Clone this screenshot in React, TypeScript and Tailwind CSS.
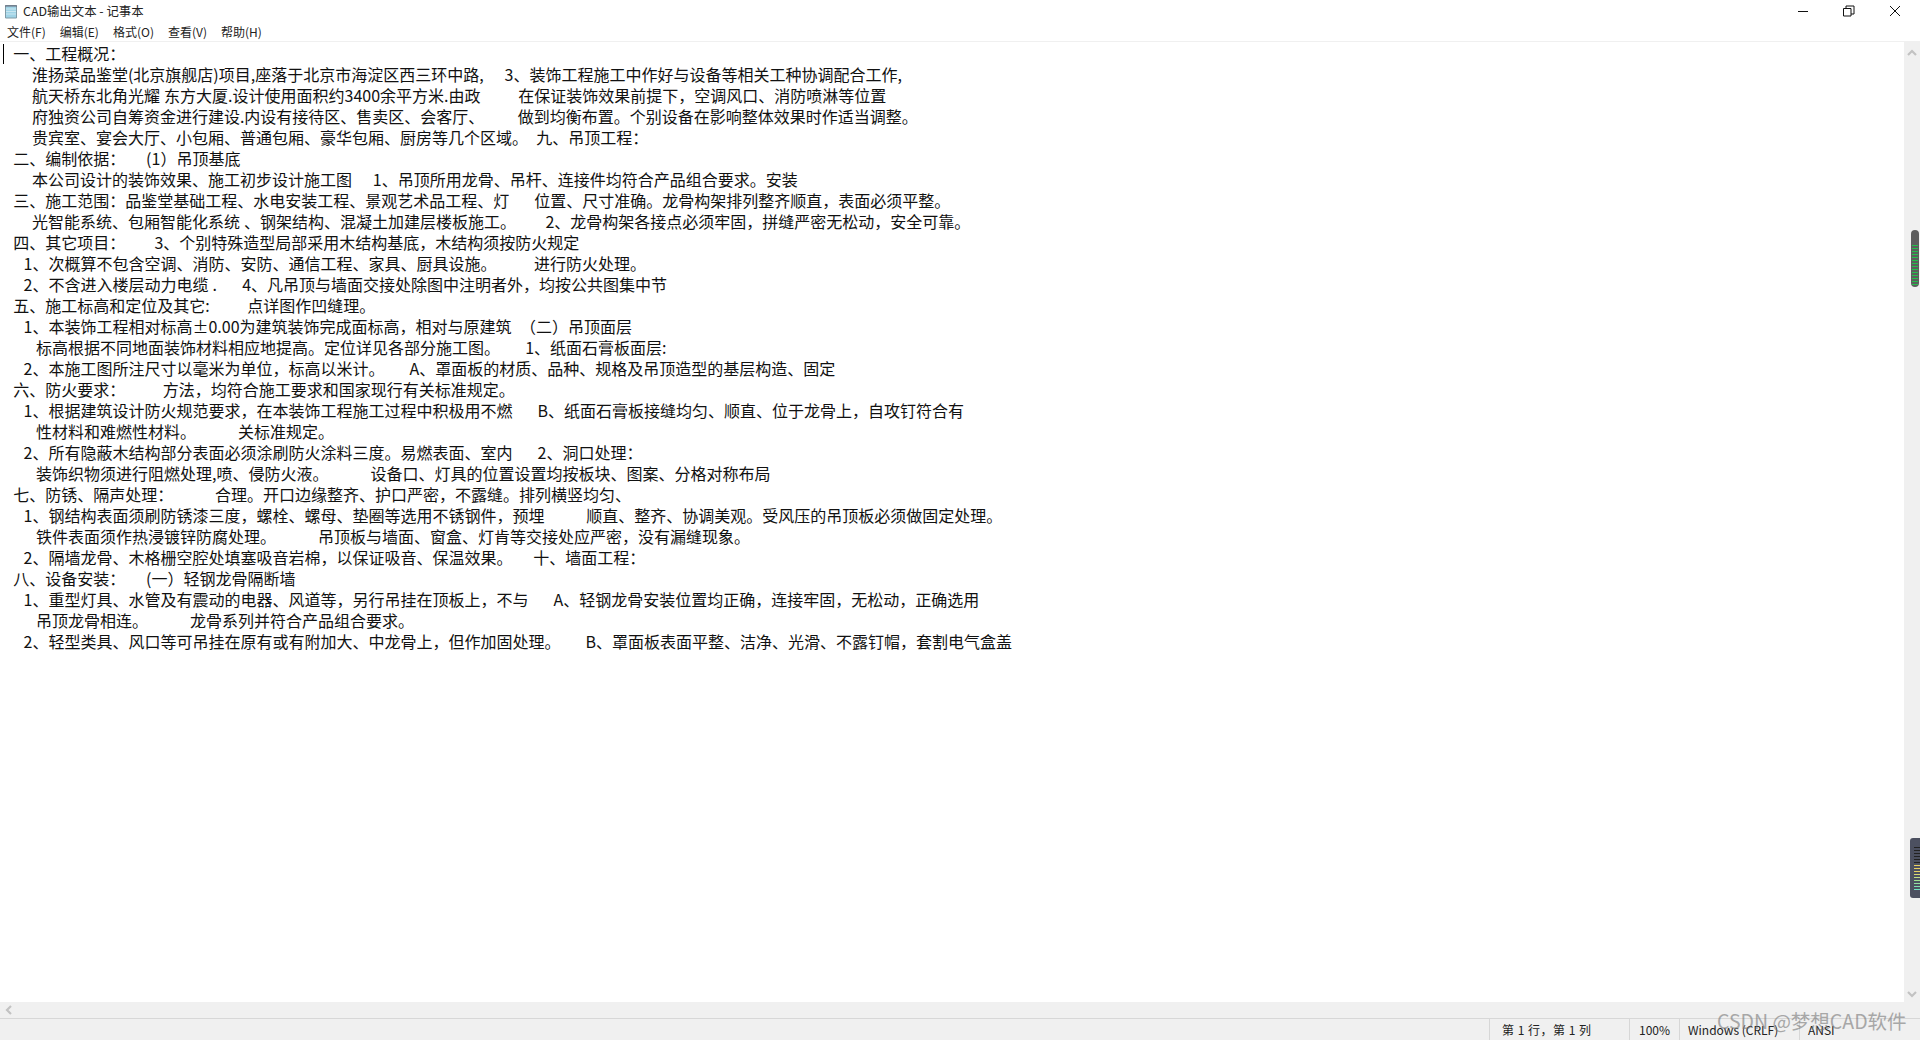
const lines = [
  " 一、工程概况：",
  "     淮扬菜品鉴堂(北京旗舰店)项目,座落于北京市海淀区西三环中路,     3、装饰工程施工中作好与设备等相关工种协调配合工作,",
  "     航天桥东北角光耀 东方大厦.设计使用面积约3400余平方米.由政         在保证装饰效果前提下，空调风口、消防喷淋等位置",
  "     府独资公司自筹资金进行建设.内设有接待区、售卖区、会客厅、        做到均衡布置。个别设备在影响整体效果时作适当调整。",
  "     贵宾室、宴会大厅、小包厢、普通包厢、豪华包厢、厨房等几个区域。  九、吊顶工程：",
  " 二、编制依据：     (1）吊顶基底",
  "     本公司设计的装饰效果、施工初步设计施工图     1、吊顶所用龙骨、吊杆、连接件均符合产品组合要求。安装",
  " 三、施工范围：品鉴堂基础工程、水电安装工程、景观艺术品工程、灯      位置、尺寸准确。龙骨构架排列整齐顺直，表面必须平整。",
  "     光智能系统、包厢智能化系统 、钢架结构、混凝土加建层楼板施工。       2、龙骨构架各接点必须牢固，拼缝严密无松动，安全可靠。",
  " 四、其它项目：       3、个别特殊造型局部采用木结构基底，木结构须按防火规定",
  "   1、次概算不包含空调、消防、安防、通信工程、家具、厨具设施。         进行防火处理。",
  "   2、不含进入楼层动力电缆 .      4、凡吊顶与墙面交接处除图中注明者外，均按公共图集中节",
  " 五、施工标高和定位及其它:         点详图作凹缝理。",
  "   1、本装饰工程相对标高±0.00为建筑装饰完成面标高，相对与原建筑  （二）吊顶面层",
  "      标高根据不同地面装饰材料相应地提高。定位详见各部分施工图。      1、纸面石膏板面层:",
  "   2、本施工图所注尺寸以毫米为单位，标高以米计。      A、罩面板的材质、品种、规格及吊顶造型的基层构造、固定",
  " 六、防火要求：         方法，均符合施工要求和国家现行有关标准规定。",
  "   1、根据建筑设计防火规范要求，在本装饰工程施工过程中积极用不燃      B、纸面石膏板接缝均匀、顺直、位于龙骨上，自攻钉符合有",
  "      性材料和难燃性材料。          关标准规定。",
  "   2、所有隐蔽木结构部分表面必须涂刷防火涂料三度。易燃表面、室内      2、洞口处理：",
  "      装饰织物须进行阻燃处理,喷、侵防火液。          设备口、灯具的位置设置均按板块、图案、分格对称布局",
  " 七、防锈、隔声处理：          合理。开口边缘整齐、护口严密，不露缝。排列横竖均匀、",
  "   1、钢结构表面须刷防锈漆三度，螺栓、螺母、垫圈等选用不锈钢件，预埋          顺直、整齐、协调美观。受风压的吊顶板必须做固定处理。",
  "      铁件表面须作热浸镀锌防腐处理。          吊顶板与墙面、窗盒、灯肯等交接处应严密，没有漏缝现象。",
  "   2、隔墙龙骨、木格栅空腔处填塞吸音岩棉，以保证吸音、保温效果。     十、墙面工程：",
  " 八、设备安装：     (一）轻钢龙骨隔断墙",
  "   1、重型灯具、水管及有震动的电器、风道等，另行吊挂在顶板上，不与      A、轻钢龙骨安装位置均正确，连接牢固，无松动，正确选用",
  "      吊顶龙骨相连。          龙骨系列并符合产品组合要求。",
  "   2、轻型类具、风口等可吊挂在原有或有附加大、中龙骨上，但作加固处理。      B、罩面板表面平整、洁净、光滑、不露钉帽，套割电气盒盖",
];

const ui = "font-['Noto_Sans_CJK_SC','Liberation_Sans',sans-serif]";

function NotepadIcon() {
  return (
    <svg width="16" height="16" viewBox="0 0 16 16" className="mr-[4px] shrink-0">
      <path d="M2.5 2.5h11v12.5h-11z" fill="#9fd3e6" stroke="#7f9aa6" />
      <path d="M3 6h10M3 8.5h10M3 11h10" stroke="#c9e6f0" />
      <path d="M3 2v2M5 2v2M7 2v2M9 2v2M11 2v2M13 2v2" stroke="#667" />
    </svg>
  );
}

function Chevron({ dir }: { dir: "up" | "down" | "left" }) {
  const d = dir === "up" ? "M1 7l4-4 4 4" : dir === "down" ? "M1 3l4 4 4-4" : "M7 1L3 5l4 4";
  return (
    <svg width="10" height="10" viewBox="0 0 10 10" className="block">
      <path d={d} fill="none" stroke="#c2c2c2" strokeWidth="2.2" />
    </svg>
  );
}

function Ticks({ colors }: { colors: string[] }) {
  return (
    <div className="flex flex-col gap-[2px]">
      {colors.map((c, i) => (
        <div key={i} className="h-[1px] w-[6px]" style={{ backgroundColor: c }} />
      ))}
    </div>
  );
}

export default function App() {
  const menu = ["文件(F)", "编辑(E)", "格式(O)", "查看(V)", "帮助(H)"];
  return (
    <div className={`relative flex h-[1040px] w-[1920px] flex-col overflow-hidden bg-white text-black ${ui}`}>
      <div className="flex h-[22px] shrink-0 items-center pl-[3px]">
        <NotepadIcon />
        <span className="text-[12.4px] leading-[22px] text-[#222]">CAD输出文本 - 记事本</span>
        <div className="ml-auto mr-[2px] flex items-center">
          <div className="flex w-[46px] justify-center">
            <svg width="12" height="12" viewBox="0 0 12 12"><path d="M1 6.5h10" stroke="#111" /></svg>
          </div>
          <div className="flex w-[46px] justify-center">
            <svg width="12" height="12" viewBox="0 0 12 12" fill="none" stroke="#111">
              <path d="M.5 3.5h7.5v7.5H.5zM3 3.5V1h8v8H8" />
            </svg>
          </div>
          <div className="flex w-[46px] justify-center">
            <svg width="12" height="12" viewBox="0 0 12 12"><path d="M1 1l10 10M11 1L1 11" stroke="#111" /></svg>
          </div>
        </div>
      </div>

      <div className="flex h-[19px] shrink-0 items-center gap-[14px] pl-[7px] text-[12px] leading-[19px] text-[#222]">
        {menu.map((m) => (
          <span key={m}>{m}</span>
        ))}
      </div>

      <div className="flex min-h-0 flex-1 border-t-[1px] border-[#f0f0f0]">
        <div className="relative min-w-0 flex-1 overflow-hidden pt-[1px] pl-[11px]">
          <div className="absolute left-[3px] top-[2px] h-[20px] w-[1px] bg-black" />
          {lines.map((l, i) => (
            <div
              key={i}
              className={`h-[21px] whitespace-pre text-[16px] leading-[21px] text-[#111] [word-spacing:0.6px] ${l.startsWith("  ") ? "" : "-ml-[2px]"}`}
            >
              {l}
            </div>
          ))}
        </div>
        <div className="flex w-[16px] shrink-0 flex-col items-center bg-[#f0f0f0]">
          <div className="mt-[6px]"><Chevron dir="up" /></div>
          <div className="ml-[6px] mt-[172px] flex h-[57px] w-[8px] flex-col justify-end rounded-[4px] bg-[#5d5d5d] px-[1px] pb-[2px]">
            <Ticks colors={Array(14).fill("#22c04a")} />
          </div>
          <div className="ml-[6px] mt-[551px] flex h-[60px] w-[10px] flex-col justify-center rounded-l-[3px] bg-[#4c5060] pl-[4px]">
            <Ticks colors={["#222","#222","#222","#222","#222","#222","#e8d060","#e8d060","#e8d060","#d8d870","#c0e080","#a0e090","#90e0a0","#80e0b0","#70e0c0"]} />
          </div>
          <div className="mt-auto mb-[3px]"><Chevron dir="down" /></div>
        </div>
      </div>

      <div className="flex h-[16px] shrink-0 items-center bg-[#f0f0f0] pl-[4px]">
        <Chevron dir="left" />
      </div>

      <div className="flex h-[22px] shrink-0 items-center border-t-[1px] border-[#d7d7d7] bg-[#f0f0f0] text-[12px] text-[#222]">
        <div className="ml-[1489px] flex h-full w-[140px] items-center border-l-[1px] border-[#d7d7d7] pl-[12px] tracking-[0.5px]">第 1 行，第 1 列</div>
        <div className="flex h-full w-[50px] items-center border-l-[1px] border-[#d7d7d7] pl-[9px]">100%</div>
        <div className="flex h-full w-[120px] items-center border-l-[1px] border-[#d7d7d7] pl-[8px]">Windows (CRLF)</div>
        <div className="flex h-full flex-1 items-center border-l-[1px] border-[#d7d7d7] pl-[8px]">ANSI</div>
      </div>

      <div className="absolute left-[1717px] top-[1008px] text-[19.5px] leading-[26px] text-[#777] opacity-60">CSDN @梦想CAD软件</div>
    </div>
  );
}
